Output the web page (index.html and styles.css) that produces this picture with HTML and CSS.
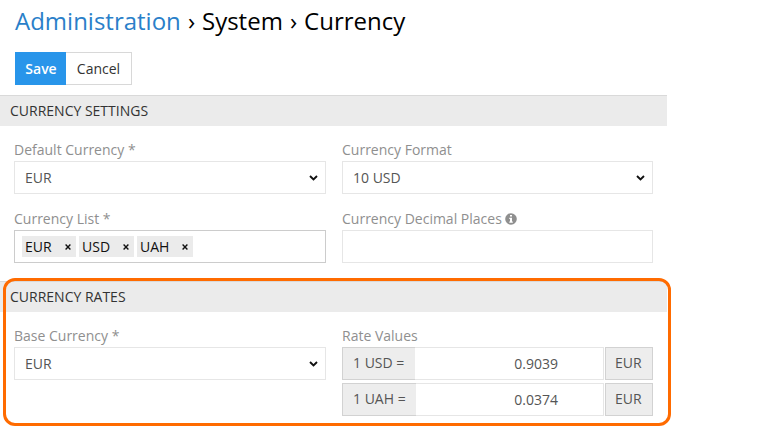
FILE: index.html
```html
<!DOCTYPE html>
<html lang="en">
<head>
<meta charset="utf-8">
<title>Currency</title>
<link rel="stylesheet" href="styles.css">
</head>
<body>
<main class="page">
  <h1 class="title"><a class="crumb">Administration</a> <span class="sep">›</span> System <span class="sep">›</span> Currency</h1>
  <div class="buttons"><button class="btn primary">Save</button><button class="btn">Cancel</button></div>

  <section class="panel settings">
    <h2 class="heading">CURRENCY SETTINGS</h2>
    <div class="grid">
      <div class="cell">
        <div class="label">Default Currency *</div>
        <div class="control">EUR<svg class="chevron" viewBox="0 0 9 6"><path d="M1 1 4.5 4.4 8 1"/></svg></div>
      </div>
      <div class="cell">
        <div class="label">Currency Format</div>
        <div class="control">10 USD<svg class="chevron" viewBox="0 0 9 6"><path d="M1 1 4.5 4.4 8 1"/></svg></div>
      </div>
      <div class="cell">
        <div class="label">Currency List *</div>
        <div class="control tags">
          <span class="tag">EUR<svg class="close" viewBox="0 0 6 6"><path d="M.6.6l4.8 4.8M5.4.6.6 5.4"/></svg></span>
          <span class="tag usd">USD<svg class="close" viewBox="0 0 6 6"><path d="M.6.6l4.8 4.8M5.4.6.6 5.4"/></svg></span>
          <span class="tag uah">UAH<svg class="close" viewBox="0 0 6 6"><path d="M.6.6l4.8 4.8M5.4.6.6 5.4"/></svg></span>
        </div>
      </div>
      <div class="cell">
        <div class="label">Currency Decimal Places<svg class="info" viewBox="0 0 12 12"><circle cx="6" cy="6" r="5.8"/><path d="M5 2h2v1.6H5zM4.3 4.8H7v3.6h.8v1.3H4.3V8.4H5V6.1h-.7z"/></svg></div>
        <div class="control"></div>
      </div>
    </div>
  </section>

  <section class="panel rates">
    <h2 class="heading">CURRENCY RATES</h2>
    <div class="grid">
      <div class="cell">
        <div class="label">Base Currency *</div>
        <div class="control">EUR<svg class="chevron" viewBox="0 0 9 6"><path d="M1 1 4.5 4.4 8 1"/></svg></div>
      </div>
      <div class="cell">
        <div class="label">Rate Values</div>
        <div class="rate"><span class="addon from">1 USD =</span><span class="value">0.9039</span><span class="addon to">EUR</span></div>
        <div class="rate"><span class="addon from wide">1 UAH =</span><span class="value">0.0374</span><span class="addon to">EUR</span></div>
      </div>
    </div>
    <div class="highlight"></div>
  </section>
</main>
</body>
</html>
```
FILE: styles.css
```css
* { box-sizing: border-box; }
body {
  margin: 0;
  background: #fff;
  font: 14px/20px "Open Sans", "Noto Sans", sans-serif;
  color: #555;
}
.page { width: 667px; height: 429px; }
.title {
  margin: 0;
  padding: 4px 0 0 15px;
  height: 52px;
  font-size: 24px;
  line-height: 33px;
  font-weight: 400;
  color: #000;
  white-space: nowrap;
}
.crumb { color: #2a7fc9; }
.sep { margin: 0 .6px 0 .9px; }
.buttons { display: flex; padding-left: 15px; height: 43px; }
.btn {
  width: 66px;
  height: 33px;
  padding: 0;
  border: 1px solid #d8d8d8;
  border-left: 0;
  background: #fff;
  font: inherit;
  color: #333;
}
.btn.primary {
  width: 51px;
  padding-left: 1px;
  border: 0;
  background: #2895ea;
  color: #fff;
  font-weight: 600;
}
.heading {
  margin: 0;
  height: 31px;
  padding: 5px 10px;
  border-top: 1px solid #d9d9d9;
  background: #ebebeb;
  font-size: 14px;
  font-weight: 400;
  color: #333;
}
.settings { height: 186px; }
.rates { position: relative; }
.grid {
  display: grid;
  grid-template-columns: 312px 311px;
  column-gap: 16px;
  padding: 14px 14px 0;
}
.cell { height: 69px; }
.label {
  display: flex;
  align-items: center;
  height: 21px;
  padding-bottom: 2px;
  color: #8f8f8f;
}
.control {
  display: flex;
  align-items: center;
  height: 33px;
  padding: 0 7px 0 10px;
  border: 1px solid #e6e6e6;
}
.chevron {
  width: 9px;
  height: 6px;
  margin-left: auto;
  fill: none;
  stroke: #111;
  stroke-width: 1.9;
}
.tags { border-color: #ccc; padding: 0 7px; gap: 3px; color: #111; }
.tag {
  display: flex;
  align-items: center;
  justify-content: space-between;
  width: 54px;
  height: 21px;
  padding: 0 5px 0 3px;
  background: #ebebeb;
}
.tag.usd { width: 55px; }
.tag.uah { width: 56px; }
.close { width: 6px; height: 6px; fill: none; stroke: #111; stroke-width: 1.4; }
.info { width: 12px; height: 12px; margin-left: 3px; fill: #8f8f8f; }
.info path { fill: #fff; }
.rate { display: flex; height: 33px; margin-bottom: 3px; }
.addon {
  padding: 5px 0 0 10px;
  border: 1px solid #d2d2d2;
  background: #ededed;
}
.from { width: 73px; border-right: 0; }
.from.wide { width: 74px; }
.value {
  flex: 1;
  padding: 6px 45px 0 0;
  border: 1px solid #e6e6e6;
  border-left: 0;
  text-align: right;
}
.to { width: 48px; margin-left: 1px; padding-left: 9px; }
.highlight {
  position: absolute;
  left: 3px;
  top: -3px;
  width: 668px;
  height: 148px;
  border: 3px solid #ff6b00;
  border-radius: 12px;
}
```
